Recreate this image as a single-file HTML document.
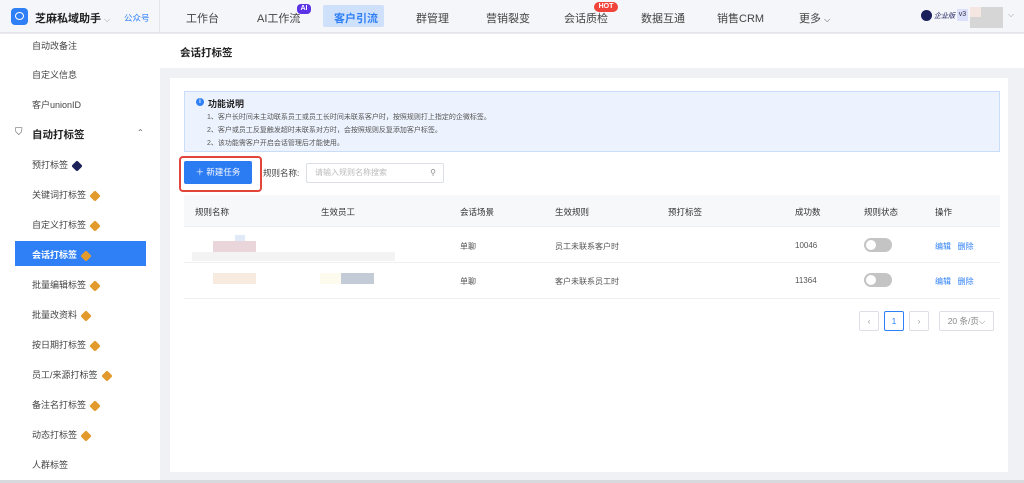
<!DOCTYPE html>
<html><head><meta charset="utf-8"><style>
*{margin:0;padding:0;box-sizing:border-box}
body{width:1024px;height:483px;overflow:hidden;font-family:"Liberation Sans","Noto Sans CJK SC",sans-serif;font-size:9px;color:#333;background:#f0f1f5;position:relative}
.abs{position:absolute}
.top{left:0;top:0;width:1024px;height:33px;background:#f5f6fa;border-bottom:1px solid #e4e6eb;box-shadow:0 1px 2px rgba(0,0,0,.05)}
.nav{position:absolute;top:10px;font-size:11px;color:#444;white-space:nowrap}
.side{left:0;top:34px;width:160px;height:446px;background:#fff}
.si{position:absolute;left:32px;font-size:9px;color:#444;white-space:nowrap}
.gem{display:inline-block;width:10px;height:10px;background:#e39a2c;border-radius:2px;transform:rotate(45deg) scale(.8);vertical-align:middle;margin-left:4px}
.th{position:absolute;top:206px;font-size:8.5px;color:#333}
.td{position:absolute;font-size:8px;color:#555}
.tog{position:absolute;left:864px;width:28px;height:14px;border-radius:7px;background:#c4c4c4}
.tog:after{content:"";position:absolute;left:2px;top:2px;width:10px;height:10px;border-radius:5px;background:#fff}
.pg{position:absolute;top:311px;height:20px;border:1px solid #dcdfe6;background:#fff;border-radius:2px;font-size:8.5px;color:#999;text-align:center;line-height:18px}
</style></head><body>
<div class="abs top">
  <div class="abs" style="left:11px;top:8px;width:17px;height:17px;background:#2f80f6;border-radius:4px"><div style="position:absolute;left:4px;top:4px;width:9px;height:8px;border:1.5px solid #fff;border-radius:50%"></div></div>
  <div class="abs" style="left:35px;top:10px;font-size:11px;font-weight:bold;color:#222">芝麻私域助手 <span style="font-weight:normal;color:#999;font-size:8px">⌵</span></div>
  <div class="abs" style="left:124px;top:12px;font-size:8.5px;color:#2f80f6">公众号</div>
  <div class="abs" style="left:159px;top:0;width:1px;height:33px;background:#e4e6eb"></div>
  <div class="nav" style="left:186px">工作台</div>
  <div class="nav" style="left:257px">AI工作流</div>
  <div class="abs" style="left:297px;top:4px;width:14px;height:10px;background:#5b32e6;border-radius:4px;color:#fff;font-size:7px;font-weight:bold;text-align:center;line-height:10px">AI</div>
  <div class="abs" style="left:323px;top:5px;width:61px;height:22px;background:#cfe0fb;border-radius:2px"></div>
  <div class="nav" style="left:334px;color:#2f80f6;font-weight:bold">客户引流</div>
  <div class="nav" style="left:416px">群管理</div>
  <div class="nav" style="left:486px">营销裂变</div>
  <div class="nav" style="left:564px">会话质检</div>
  <div class="abs" style="left:594px;top:2px;width:24px;height:10px;background:#f0443b;border-radius:5px;color:#fff;font-size:7px;font-weight:bold;text-align:center;line-height:10px">HOT</div>
  <div class="nav" style="left:641px">数据互通</div>
  <div class="nav" style="left:717px">销售CRM</div>
  <div class="nav" style="left:799px">更多 <span style="font-size:8px">⌵</span></div>
  <div class="abs" style="left:921px;top:10px;width:11px;height:11px;border-radius:50%;background:#1a1f5c"></div>
  <div class="abs" style="left:934px;top:11px;font-size:7px;font-style:italic;color:#1a1f5c">企业版</div>
  <div class="abs" style="left:957px;top:9px;width:11px;height:12px;background:#dde0fb;font-size:7px;color:#334;text-align:center;line-height:12px">v3</div>
  <div class="abs" style="left:970px;top:7px;width:33px;height:21px;background:#d6d6d6"></div>
  <div class="abs" style="left:970px;top:7px;width:11px;height:10px;background:#f5e6e1"></div>
  <div class="abs" style="left:1008px;top:10px;font-size:8px;color:#999">⌵</div>
</div>
<div class="abs side">
  <div class="si" style="top:5px">自动改备注</div>
  <div class="si" style="top:34px">自定义信息</div>
  <div class="si" style="top:64px">客户unionID</div>
  <div class="abs" style="left:15px;top:93px;font-size:10px;color:#555">⛉</div>
  <div class="abs" style="left:32px;top:93px;font-size:10.5px;font-weight:bold;color:#222">自动打标签</div>
  <div class="abs" style="left:137px;top:94px;font-size:8px;color:#666">⌃</div>
  <div class="si" style="top:124px">预打标签<span class="gem" style="background:#1c2157"></span></div>
  <div class="si" style="top:154px">关键词打标签<span class="gem"></span></div>
  <div class="si" style="top:184px">自定义打标签<span class="gem"></span></div>
  <div class="abs" style="left:15px;top:207px;width:131px;height:25px;background:#2f80f6"></div>
  <div class="si" style="top:214px;color:#fff;font-weight:bold">会话打标签<span class="gem"></span></div>
  <div class="si" style="top:244px">批量编辑标签<span class="gem"></span></div>
  <div class="si" style="top:274px">批量改资料<span class="gem"></span></div>
  <div class="si" style="top:304px">按日期打标签<span class="gem"></span></div>
  <div class="si" style="top:334px">员工/来源打标签<span class="gem"></span></div>
  <div class="si" style="top:364px">备注名打标签<span class="gem"></span></div>
  <div class="si" style="top:394px">动态打标签<span class="gem"></span></div>
  <div class="si" style="top:424px">人群标签</div>
</div>
<div class="abs" style="left:160px;top:34px;width:864px;height:34px;background:#fff"></div>
<div class="abs" style="left:180px;top:45px;font-size:10.5px;font-weight:bold;color:#222">会话打标签</div>
<div class="abs" style="left:170px;top:78px;width:838px;height:394px;background:#fff"></div>
<div class="abs" style="left:0;top:480px;width:1024px;height:3px;background:#d8d9dc"></div>
<div class="abs" style="left:184px;top:91px;width:816px;height:61px;background:#edf3fe;border:1px solid #c9dcf8"></div>
<div class="abs" style="left:196px;top:98px;width:8px;height:8px;border-radius:50%;background:#2f80f6;color:#fff;font-size:6px;text-align:center;line-height:8px;font-weight:bold">i</div>
<div class="abs" style="left:208px;top:97px;font-size:9px;font-weight:bold;color:#222">功能说明</div>
<div class="abs" style="left:207px;top:111px;font-size:7px;color:#555;line-height:13px">1、客户长时间未主动联系员工或员工长时间未联系客户时，按照规则打上指定的企微标签。<br>2、客户或员工反复触发超时未联系对方时，会按照规则反复添加客户标签。<br>2、该功能需客户开启会话管理后才能使用。</div>
<div class="abs" style="left:179px;top:156px;width:83px;height:36px;border:2px solid #e2463a;border-radius:4px"></div>
<div class="abs" style="left:184px;top:161px;width:68px;height:23px;background:#2b7bf3;border-radius:2px;color:#fff;font-size:8.5px;line-height:23px;text-align:center">＋ 新建任务</div>
<div class="abs" style="left:263px;top:167px;font-size:8.5px;color:#444">规则名称:</div>
<div class="abs" style="left:306px;top:163px;width:138px;height:20px;border:1px solid #dcdfe6;border-radius:2px;font-size:8px;color:#bbb;line-height:18px;padding-left:8px">请输入规则名称搜索<span style="position:absolute;right:7px;color:#888">⚲</span></div>
<div class="abs" style="left:184px;top:195px;width:816px;height:32px;background:#f7f8fa;border-bottom:1px solid #eef0f3"></div>
<div class="th" style="left:195px">规则名称</div><div class="th" style="left:321px">生效员工</div><div class="th" style="left:460px">会话场景</div><div class="th" style="left:555px">生效规则</div><div class="th" style="left:668px">预打标签</div><div class="th" style="left:795px">成功数</div><div class="th" style="left:864px">规则状态</div><div class="th" style="left:935px">操作</div>
<div class="abs" style="left:184px;top:262px;width:816px;height:1px;background:#eef0f3"></div>
<div class="abs" style="left:184px;top:298px;width:816px;height:1px;background:#eef0f3"></div>
<div class="abs" style="left:213px;top:241px;width:43px;height:11px;background:#ead6da"></div>
<div class="abs" style="left:235px;top:235px;width:10px;height:6px;background:#deebf7"></div>
<div class="abs" style="left:192px;top:252px;width:203px;height:9px;background:#f3f3f3"></div>
<div class="abs" style="left:213px;top:273px;width:43px;height:11px;background:#f7ebdf"></div>
<div class="abs" style="left:320px;top:273px;width:54px;height:11px;background:#c3cbd6"></div>
<div class="abs" style="left:320px;top:273px;width:21px;height:11px;background:#fdfbee"></div>
<div class="td" style="left:460px;top:241px">单聊</div><div class="td" style="left:555px;top:241px">员工未联系客户时</div><div class="td" style="left:795px;top:241px">10046</div>
<div class="td" style="left:460px;top:276px">单聊</div><div class="td" style="left:555px;top:276px">客户未联系员工时</div><div class="td" style="left:795px;top:276px">11364</div>
<div class="tog" style="top:238px"></div><div class="tog" style="top:273px"></div>
<div class="td" style="left:935px;top:241px;color:#2f80f6">编辑 &nbsp; 删除</div>
<div class="td" style="left:935px;top:276px;color:#2f80f6">编辑 &nbsp; 删除</div>
<div class="pg" style="left:859px;width:20px">‹</div>
<div class="pg" style="left:884px;width:20px;border-color:#2f80f6;color:#2f80f6">1</div>
<div class="pg" style="left:909px;width:20px">›</div>
<div class="pg" style="left:939px;width:55px;color:#888">20 条/页⌵</div>
</body></html>
